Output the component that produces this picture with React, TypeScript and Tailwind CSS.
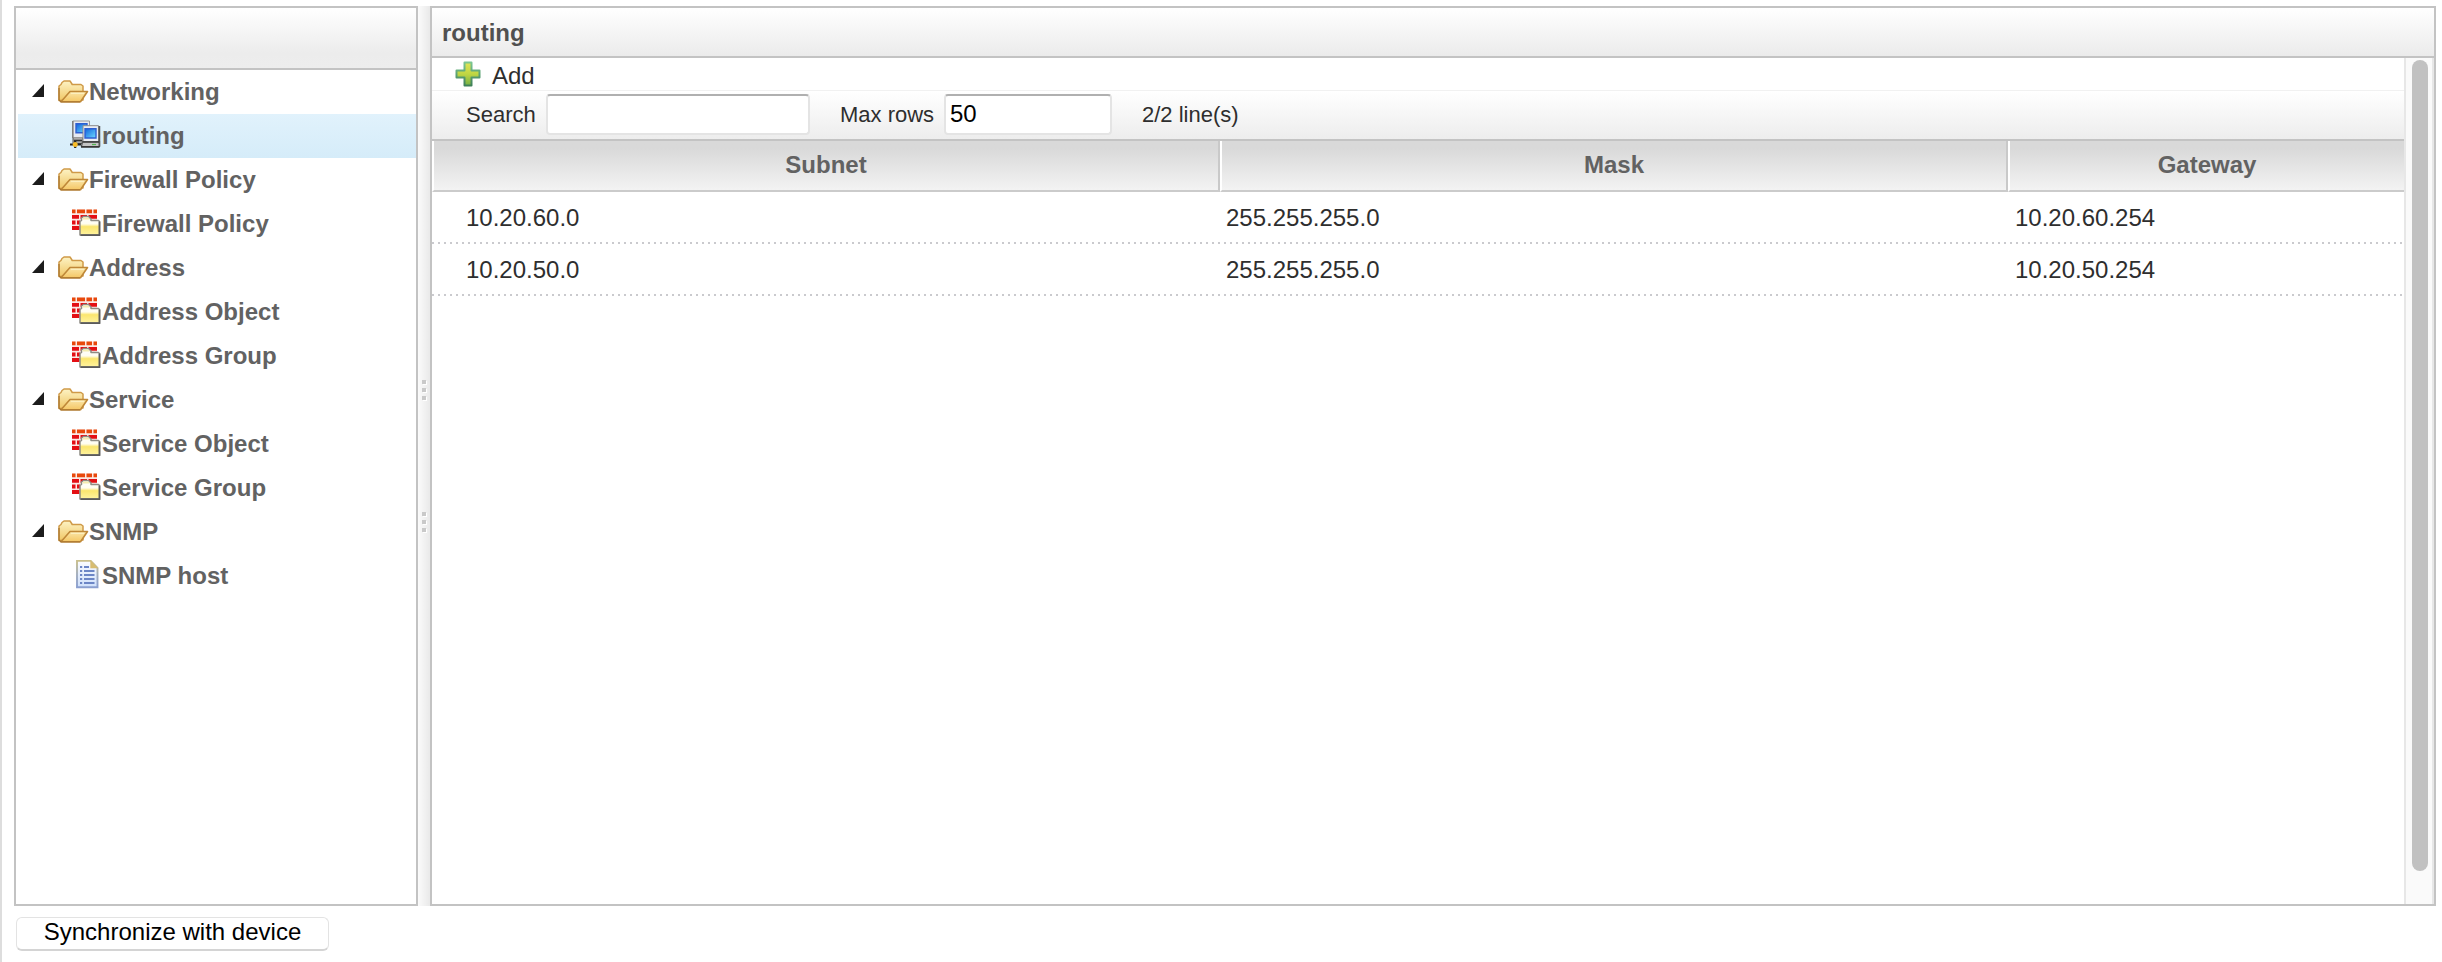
import React from "react";

function FolderIcon() {
  return (
    <svg width="32" height="24" viewBox="0 0 32 24">
      <defs>
        <linearGradient id="fb" x1="0" y1="0" x2="0" y2="1">
          <stop offset="0" stopColor="#fdf3c4" />
          <stop offset="1" stopColor="#f0c766" />
        </linearGradient>
        <linearGradient id="ff" x1="0" y1="0" x2="0" y2="1">
          <stop offset="0" stopColor="#fae6a8" />
          <stop offset="1" stopColor="#f5c765" />
        </linearGradient>
      </defs>
      <path d="M1 20.5V6l2-1.500 1-2 2-1.500h6l2 3v.5h9l2 1.500v14z" fill="url(#fb)" stroke="#cf9a48" strokeWidth="1.500" strokeLinejoin="round" />
      <path d="M3 21.700L12 11.500h17.500L22.500 21.700z" fill="url(#ff)" stroke="#bf8838" strokeWidth="1.600" strokeLinejoin="round" />
      <path d="M1 8v12l2 2h19" fill="none" stroke="#a8742c" strokeWidth="1.200" />
      <path d="M13 13.300h13" stroke="#fdf3c8" />
    </svg>
  );
}

function NetworkIcon() {
  return (
    <svg width="32" height="30" viewBox="0 0 32 30">
      <defs>
        <linearGradient id="sc" x1="0" y1="0" x2="1" y2="1">
          <stop offset="0" stopColor="#0f62dc" />
          <stop offset="1" stopColor="#6fdcff" />
        </linearGradient>
      </defs>
      <path d="M3 17h10v7.500H3z" fill="#a9a9a9" stroke="#555" />
      <path d="M4 21.500h8" stroke="#333" strokeWidth="1.500" />
      <path d="M2.800 2h16.700v16.500H2.800z" fill="#e6eaf2" stroke="#9a9a9a" />
      <path d="M2.800 2v17" stroke="#777" strokeWidth="1.300" />
      <path d="M6 4.700h11v9H6z" fill="url(#sc)" stroke="#2f5fd0" strokeWidth="1.400" />
      <path d="M12.500 22.500h17v5h-18z" fill="#c4c4c4" stroke="#4a4a4a" strokeWidth="1.200" />
      <path d="M13 6.700h15.500v15.800H13z" fill="#eaedf4" stroke="#8b8b8b" />
      <path d="M29.400 7v20.500" stroke="#555" strokeWidth="1.700" />
      <path d="M13 23h16M11 28h18.500" stroke="#333" strokeWidth="1.500" />
      <path d="M15 9.700h11v9.300H15z" fill="url(#sc)" stroke="#2f5fd0" strokeWidth="1.400" />
      <path d="M0 25.500h11M5.200 22v7" stroke="#222" strokeWidth="2.200" />
      <circle cx="5.200" cy="25.500" r="2.500" fill="#f7bd2a" />
      <path d="M22 25.500h4" stroke="#53b653" strokeWidth="1.200" />
    </svg>
  );
}

function FirewallIcon() {
  return (
    <svg width="32" height="30" viewBox="0 0 32 30">
      <defs>
        <linearGradient id="wf" x1="0" y1="0" x2="0" y2="1">
          <stop offset="0" stopColor="#ffffff" />
          <stop offset="0.400" stopColor="#fffdf0" />
          <stop offset="0.550" stopColor="#fbe66e" />
          <stop offset="1" stopColor="#fff3a0" />
        </linearGradient>
      </defs>
      <path d="M2 2.500h25v19.500H2z" fill="#fbe9e4" />
      <path d="M2 4.300h3.500M7 4.300h8M16.500 4.300h5.500M23.500 4.300h3.500" stroke="#e8480c" strokeWidth="3.800" />
      <path d="M2 9.900h7M10.500 9.900h6.500M18.500 9.900h8.500M2 15.500h3.500M7 15.500h3M2 21h7.500" stroke="#e30f14" strokeWidth="3.800" />
      <path d="M10 28V14.500l1.500-1V11l2-1.500h5l2.500 2.500v1.500h7.500l1 1V28z" fill="url(#wf)" stroke="#8f8c84" strokeWidth="1.500" strokeLinejoin="round" />
      <path d="M12.500 12.500v-1l1.200-1h4.600l1.500 2z" fill="#f3ecae" />
      <path d="M10.500 28.200h19V14.500" fill="none" stroke="#5a5a5a" strokeWidth="1.700" />
    </svg>
  );
}

function DocumentIcon() {
  return (
    <svg width="32" height="30" viewBox="0 0 32 30">
      <defs>
        <linearGradient id="dg" x1="0" y1="0" x2="0" y2="1">
          <stop offset="0" stopColor="#fbfcff" />
          <stop offset="1" stopColor="#cfe0fb" />
        </linearGradient>
        <linearGradient id="ds" x1="0" y1="0" x2="0" y2="1">
          <stop offset="0" stopColor="#c9bf8c" />
          <stop offset="0.500" stopColor="#a3aebd" />
          <stop offset="1" stopColor="#8a9fd0" />
        </linearGradient>
      </defs>
      <path d="M7 1.900h13.800l6.700 7v19.300H7z" fill="url(#dg)" stroke="url(#ds)" strokeWidth="1.900" />
      <path d="M20.300 1.300v8h8z" fill="#d8bd70" />
      <path d="M10 8h2.200M14 8h5M10 12h2.200M14 12h10.500M10 16h2.200M14 16h10.500M10 20h2.200M14 20h10.500M10 24h2.200M14 24h10.500" stroke="#6c86c6" strokeWidth="2" />
    </svg>
  );
}

function PlusIcon() {
  return (
    <svg width="26" height="26" viewBox="0 0 26 26">
      <defs>
        <linearGradient id="pg" x1="0" y1="0" x2="0" y2="1">
          <stop offset="0" stopColor="#e0e458" />
          <stop offset="0.500" stopColor="#c0d643" />
          <stop offset="1" stopColor="#74b044" />
        </linearGradient>
        <linearGradient id="ps" x1="0" y1="0" x2="0" y2="1">
          <stop offset="0" stopColor="#7cc692" />
          <stop offset="1" stopColor="#3f8058" />
        </linearGradient>
      </defs>
      <path d="M9.500 1.500h7v8h8v7h-8v8h-7v-8h-8v-7h8z" fill="url(#pg)" stroke="url(#ps)" strokeWidth="2" strokeLinejoin="round" />
    </svg>
  );
}

type Leaf = { label: string; icon: () => React.ReactElement; selected?: boolean };

const tree: { label: string; items: Leaf[] }[] = [
  { label: "Networking", items: [{ label: "routing", icon: NetworkIcon, selected: true }] },
  { label: "Firewall Policy", items: [{ label: "Firewall Policy", icon: FirewallIcon }] },
  {
    label: "Address",
    items: [
      { label: "Address Object", icon: FirewallIcon },
      { label: "Address Group", icon: FirewallIcon },
    ],
  },
  {
    label: "Service",
    items: [
      { label: "Service Object", icon: FirewallIcon },
      { label: "Service Group", icon: FirewallIcon },
    ],
  },
  { label: "SNMP", items: [{ label: "SNMP host", icon: DocumentIcon }] },
];

const routes = [
  ["10.20.60.0", "255.255.255.0", "10.20.60.254"],
  ["10.20.50.0", "255.255.255.0", "10.20.50.254"],
];

function Sidebar() {
  return (
    <nav className="w-[404px] border-2 border-[#c3c3c3] bg-white font-bold text-[#626262]">
      <div className="h-[62px] border-b-2 border-[#c3c3c3] bg-linear-to-b from-white via-[#ececec] via-75% to-[#ededed]" />
      {tree.map((group) => (
        <div key={group.label}>
          <div className="flex h-11 items-center pl-4">
            <svg width="12" height="13" viewBox="0 0 12 13" className="mb-1">
              <path d="M12 0v13H0z" fill="#1c1c1c" />
            </svg>
            <div className="ml-3.5 w-[31px] pb-px">
              <FolderIcon />
            </div>
            <span>{group.label}</span>
          </div>
          {group.items.map((item) => (
            <div
              key={item.label}
              className={
                item.selected
                  ? "ml-0.5 flex h-11 items-center bg-linear-to-b from-[#e1f2fc] to-[#d5ecf9] pl-[52px]"
                  : "ml-0.5 flex h-11 items-center pl-[52px]"
              }
            >
              <div className="mb-1 w-8">
                <item.icon />
              </div>
              <span>{item.label}</span>
            </div>
          ))}
        </div>
      ))}
    </nav>
  );
}

function Grip() {
  return (
    <div className="flex flex-col gap-1">
      {[0, 1, 2].map((n) => (
        <span key={n} className="size-1 bg-[#c9c9c9] shadow-[1px_1px_0_#fff]" />
      ))}
    </div>
  );
}

function Splitter() {
  return (
    <div className="flex w-3 flex-col items-center gap-[112px] bg-linear-to-r from-[#fbfbfb] to-[#e9e9e9] pt-[374px]">
      <Grip />
      <Grip />
    </div>
  );
}

const inputClass =
  "h-[41px] rounded border-2 border-[#e4e4e4] border-t-[#b0b0b0] bg-white pl-1 pb-0.5 text-2xl text-black outline-none";

const headClass =
  "flex items-center justify-center border-l-2 border-l-white bg-linear-to-b from-[#d9d9d9] from-15% to-[#f3f3f3] pb-0.5";

function Toolbar() {
  return (
    <>
      <div className="flex h-8 items-center pl-[23px]">
        <PlusIcon />
        <span className="ml-[11px] pt-1">Add</span>
      </div>
      <div className="flex h-[51px] items-center border-t border-b-2 border-t-[#f1f1f1] border-b-[#c3c3c3] bg-linear-to-b from-white to-[#ededed] pb-px pl-[34px] text-[22px]">
        <label className="w-20">Search</label>
        <input className={`${inputClass} w-[264px]`} />
        <label className="ml-[30px] w-[104px]">Max rows</label>
        <input className={`${inputClass} w-[168px]`} defaultValue="50" />
        <span className="ml-[30px]">2/2 line(s)</span>
      </div>
    </>
  );
}

function RoutingTable() {
  return (
    <div className="grid grid-cols-[788px_788px_396px]">
      <div className={`${headClass} h-[51px] border-b-2 border-b-[#cbcbcb] border-r-2 border-r-[#c9c9c9] font-bold text-[#626262]`}>Subnet</div>
      <div className={`${headClass} h-[51px] border-b-2 border-b-[#cbcbcb] border-r-2 border-r-[#c9c9c9] font-bold text-[#626262]`}>Mask</div>
      <div className={`${headClass} h-[51px] border-b-2 border-b-[#cbcbcb] font-bold text-[#626262]`}>Gateway</div>
      {routes.map(([subnet, mask, gateway]) => (
        <div
          key={subnet}
          className="col-span-3 grid h-[52px] grid-cols-subgrid items-center bg-[repeating-linear-gradient(to_right,#cacace_0_2px,transparent_2px_6px)] bg-[length:100%_2px] bg-bottom bg-no-repeat"
        >
          <span className="pl-[34px]">{subnet}</span>
          <span className="pl-1.5">{mask}</span>
          <span className="pl-[7px]">{gateway}</span>
        </div>
      ))}
    </div>
  );
}

export default function App() {
  return (
    <div className="h-[962px] w-[2442px] border-l-2 border-[#dddddd] bg-white pt-1.5 pl-3 font-['Liberation_Sans',Arial,sans-serif] text-2xl leading-7 text-[#2e2e2e]">
      <div className="flex h-[900px]">
        <Sidebar />
        <Splitter />
        <main className="flex w-[2006px] flex-col border-2 border-[#c3c3c3]">
          <h1 className="flex h-[50px] items-center border-b-2 border-[#c3c3c3] bg-linear-to-b from-white to-[#ebebeb] pt-0.5 pl-2.5 font-bold text-[#505050]">
            routing
          </h1>
          <div className="flex flex-1">
            <section className="w-[1972px]">
              <Toolbar />
              <RoutingTable />
            </section>
            <div className="w-[30px] border-x-2 border-[#e7e7e7] bg-[#fafafa] pt-0.5 pl-1.5">
              <div className="h-[811px] w-4 rounded-full bg-[#c1c1c1]" />
            </div>
          </div>
        </main>
      </div>
      <button className="mt-[11px] ml-0.5 flex h-[34px] w-[313px] items-center justify-center rounded-md border border-b-2 border-[#e3e3e3] border-b-[#d4d4d4] bg-white pb-[3px] text-black">
        Synchronize with device
      </button>
    </div>
  );
}
